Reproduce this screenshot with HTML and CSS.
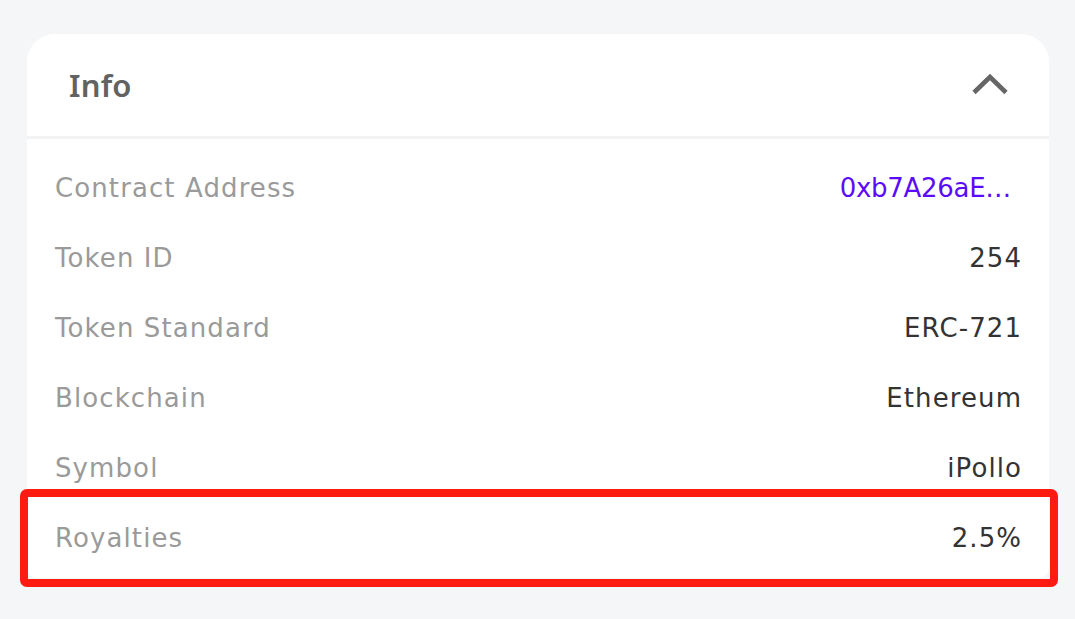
FILE: index.html
```html
<!DOCTYPE html>
<html>
<head>
<meta charset="utf-8">
<link rel="stylesheet" href="styles.css">
</head>
<body>
<div class="page">
  <section class="card">
    <header class="card-head">
      <h2 class="title">Info</h2>
      <svg class="chev" width="38" height="24" viewBox="0 0 38 24" aria-hidden="true">
        <path d="M3 20.5 L19 5 L35 20.5" fill="none" stroke="#666666" stroke-width="4.6" stroke-linecap="butt" stroke-linejoin="miter"/>
      </svg>
    </header>
    <div class="card-body">
      <div class="row"><span class="label">Contract Address</span><span class="value link">0xb7A26aE…</span></div>
      <div class="row"><span class="label">Token ID</span><span class="value">254</span></div>
      <div class="row"><span class="label">Token Standard</span><span class="value">ERC-721</span></div>
      <div class="row"><span class="label">Blockchain</span><span class="value">Ethereum</span></div>
      <div class="row"><span class="label">Symbol</span><span class="value">iPollo</span></div>
      <div class="row"><span class="label">Royalties</span><span class="value">2.5%</span></div>
    </div>
  </section>
  <div class="highlight"></div>
</div>
</body>
</html>
```
FILE: styles.css
```css
html, body {
  margin: 0;
  padding: 0;
  background: #f5f6f8;
}
body {
  font-family: "Noto Sans", "Open Sans", sans-serif;
}
.page {
  position: relative;
  width: 1075px;
  height: 619px;
  padding: 34px 26px 0 27px;
  box-sizing: border-box;
}
.card {
  background: #ffffff;
  border-radius: 28px 28px 10px 10px;
  height: 544px;
  display: flex;
  flex-direction: column;
}
.card-head {
  height: 102px;
  border-bottom: 3px solid #f2f3f5;
  display: flex;
  align-items: center;
  justify-content: space-between;
  padding: 0 40px 0 42px;
  box-sizing: content-box;
}
.title {
  margin: 0;
  font-size: 31px;
  font-weight: 600;
  color: #626262;
  letter-spacing: 0.2px;
}
.chev {
  display: block;
  margin-top: -2px;
}
.card-body {
  padding: 14px 28px 5px 28px;
  display: flex;
  flex-direction: column;
}
.row {
  height: 70px;
  display: flex;
  align-items: center;
  justify-content: space-between;
  font-family: "DejaVu Sans", sans-serif;
  font-size: 26px;
  letter-spacing: 1.1px;
}
.label {
  color: #9a9a9a;
}
.value {
  color: #333333;
  margin-right: -1.1px;
}
.value.link {
  color: #5a0cf8;
  letter-spacing: -0.3px;
  margin-right: 10px;
}
.highlight {
  position: absolute;
  left: 20px;
  top: 489px;
  width: 1038px;
  height: 98px;
  box-sizing: border-box;
  border: 8px solid #fe1c12;
  border-radius: 7px;
}
```
